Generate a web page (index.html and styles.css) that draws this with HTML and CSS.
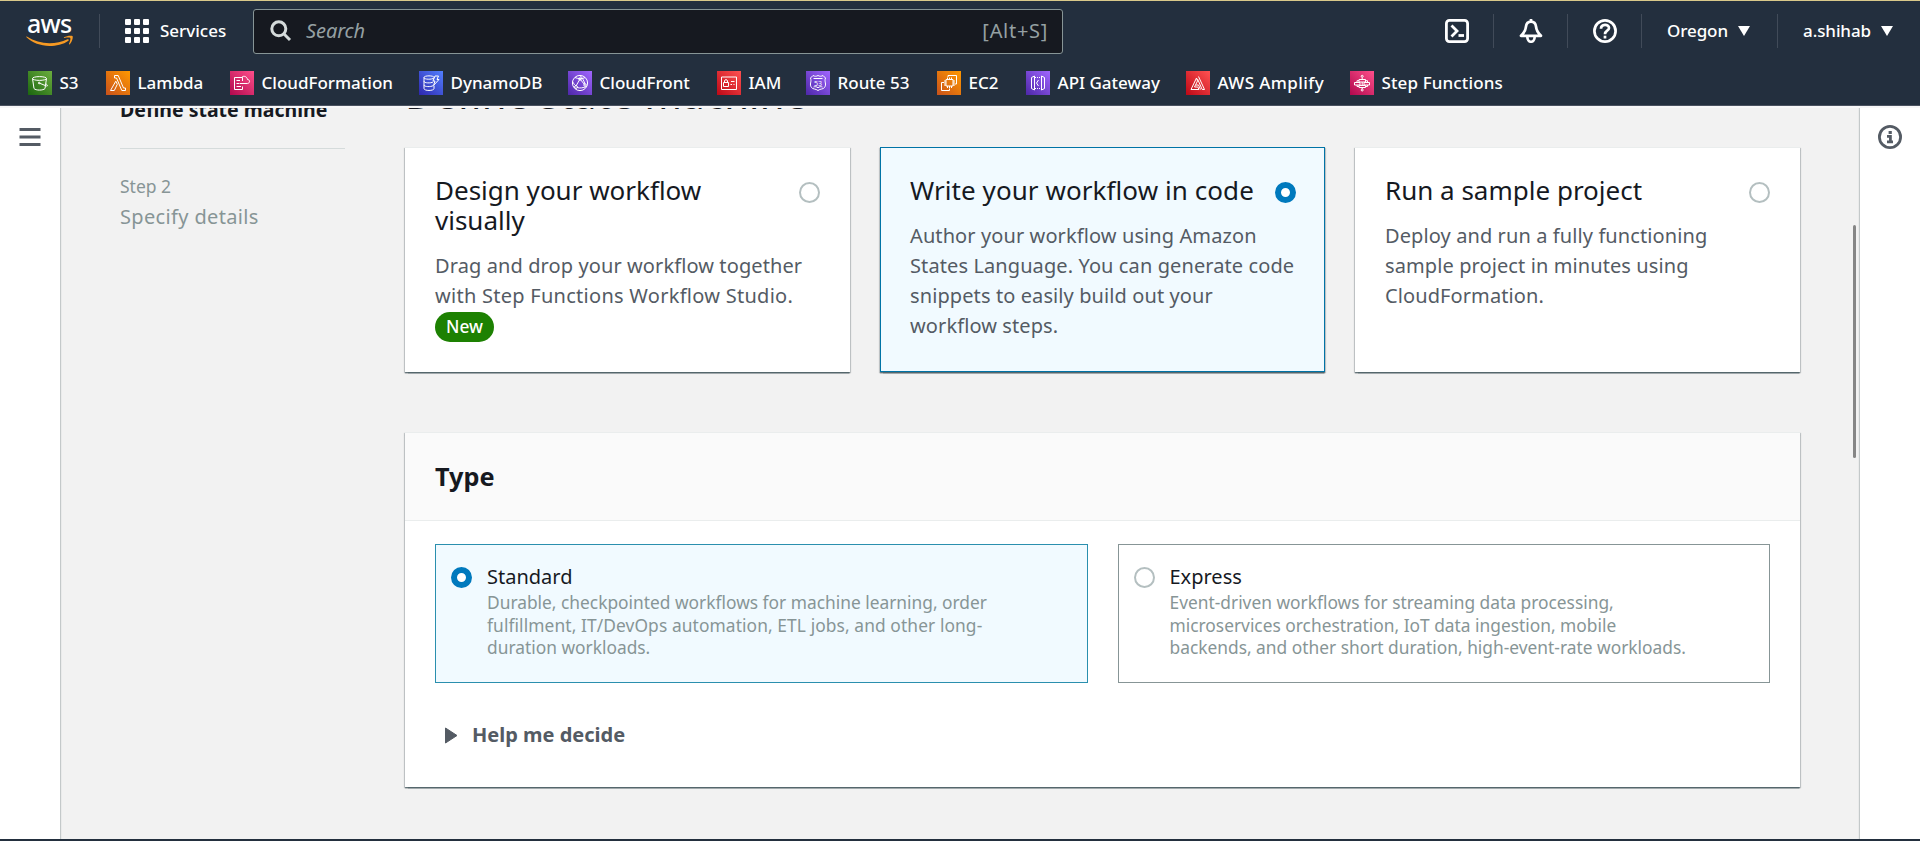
FILE: index.html
```
<!DOCTYPE html>
<html lang="en">
<head>
<meta charset="utf-8">
<title>Step Functions - Define state machine</title>
<link rel="stylesheet" href="styles.css">
</head>
<body>
<header class="header">
  <div class="topnav">
    <a class="logo">
      <span class="logo-text">aws</span>
      <svg class="logo-smile" width="48" height="12" viewBox="0 0 48 12"><path d="M0.8 1.6C8 6 15.500 8.200 23.500 8.200C29.500 8.200 36 6.900 41.500 4.300C42.600 3.800 43.300 5 42.400 5.700C37.300 9.400 30 11 23.500 11C14.500 11 6.500 7.700 0.500 2.300C0 1.900 0.300 1.300 0.800 1.600Z" fill="#f79a23"/><path d="M38 2.300C40.500 0.500 45.500 0.300 46.500 1C47.300 2 46.300 6.800 43.700 9.200C43.200 9.600 42.800 9.300 43 8.800C43.700 7.200 44.900 3.900 44.300 3.100C43.700 2.300 40.300 2.700 38.500 2.900C37.900 3 37.700 2.600 38 2.300Z" fill="#f79a23"/></svg>
    </a>
    <span class="divider"></span>
    <a class="services">
      <svg width="24" height="24" viewBox="0 0 24 24" fill="#fff"><rect width="6" height="6" rx="1"/><rect x="9" width="6" height="6" rx="1"/><rect x="18" width="6" height="6" rx="1"/><rect y="9" width="6" height="6" rx="1"/><rect x="9" y="9" width="6" height="6" rx="1"/><rect x="18" y="9" width="6" height="6" rx="1"/><rect y="18" width="6" height="6" rx="1"/><rect x="9" y="18" width="6" height="6" rx="1"/><rect x="18" y="18" width="6" height="6" rx="1"/></svg>
      <span>Services</span>
    </a>
    <div class="search">
      <svg width="22" height="22" viewBox="0 0 22 22" fill="none" stroke="#d5dbdb" stroke-width="3"><circle cx="8.800" cy="8.800" r="7"/><path d="M13.800 13.800L20 20"/></svg>
      <span class="search-hint">Search</span>
      <span class="search-key">[Alt+S]</span>
    </div>
    <div class="tools">
      <a class="tool"><svg width="24" height="24" viewBox="0 0 24 24" fill="none" stroke="#fff" stroke-width="2.800"><rect x="1.400" y="1.400" width="21.200" height="21.200" rx="3"/><path d="M6.500 6.500L12 12L6.500 17.500"/><path d="M13.500 16.500H19"/></svg></a>
      <span class="divider"></span>
      <a class="tool"><svg width="24" height="24" viewBox="0 0 24 24" fill="none" stroke="#fff" stroke-width="2.700" stroke-linejoin="round"><path d="M12 0V3"/><path d="M12 2.600C8.500 2.600 7.300 5 7 7.500C6.600 11.500 5 14 2 16.800H22C19 14 17.400 11.500 17 7.500C16.700 5 15.500 2.600 12 2.600Z"/><path d="M8.300 17.500C8.300 24.500 15.700 24.500 15.700 17.500"/></svg></a>
      <span class="divider"></span>
      <a class="tool"><svg width="24" height="24" viewBox="0 0 24 24" fill="none" stroke="#fff" stroke-width="2.700"><circle cx="12" cy="12" r="10.600"/><path d="M8 9.700C8 4.600 16 4.700 16 9C16 12 12 11.500 12 15.200"/><path d="M12 16.700V19.500"/></svg></a>
      <span class="divider"></span>
      <a class="menu menu-region"><span>Oregon</span><i class="caret"></i></a>
      <span class="divider"></span>
      <a class="menu"><span>a.shihab</span><i class="caret"></i></a>
    </div>
  </div>
  <nav class="favorites">
    <a class="fav"><svg class="fav-icon bg-green" viewBox="0 0 24 24"><ellipse cx="11.500" cy="7.500" rx="7" ry="1.900"/><path d="M4.500 7.500L6 17.500C7.500 19.600 15.500 19.600 17 17.500L18.500 7.500M11.500 12.200L18.500 15C20.300 15.200 19.500 13.700 17.800 12.800"/><circle cx="11.200" cy="12" r=".8"/></svg><span>S3</span></a>
    <a class="fav"><svg class="fav-icon bg-orange" viewBox="0 0 24 24"><path d="M8.500 4.500H12.200L17.500 17H19.500V19.500H15.800L10.500 7H8.500ZM9.800 10.200L11.300 13.300L8.300 19.500H4.500Z"/></svg><span>Lambda</span></a>
    <a class="fav"><svg class="fav-icon bg-pink" viewBox="0 0 24 24"><path d="M12.500 10V6.500H4.500V18.500H12.500V15.500M6.500 9.500H10M6.500 12.500H9M6.500 15.500H11M9.500 12.500H17.500C20.500 12 20 8.500 17.500 8.500C17 5 12.500 4.200 11.500 7"/></svg><span>CloudFormation</span></a>
    <a class="fav"><svg class="fav-icon bg-blue" viewBox="0 0 24 24"><path d="M15 6.500C15 4.300 5 4.300 5 6.500V17.500C5 20.100 15 20.100 15 17.500V14.500M5 6.500C5 8.700 13 8.700 15 7M5 10.200C5 12.300 12 12.300 14 11M5 13.900C5 16 12 16 14 14.700M16 5H19.500L18 8.500H20L14.500 14.500L16 10H14Z"/></svg><span>DynamoDB</span></a>
    <a class="fav"><svg class="fav-icon bg-purple" viewBox="0 0 24 24"><circle cx="12" cy="12" r="7.600"/><path d="M7 6.500C10 8 15 8 17 6.500M8 15L12 8L16.500 13.500M8 15C5.500 13 5 11 4.500 10.500M9 16.500C12 17.500 15 16.800 18.500 15.500M12 4.500C14.500 7 16 10 17 13"/><circle cx="12" cy="8" r="1.200"/><circle cx="8" cy="16" r="1.400"/><circle cx="17" cy="14" r="1.200"/></svg><span>CloudFront</span></a>
    <a class="fav"><svg class="fav-icon bg-red" viewBox="0 0 24 24"><path d="M4.500 6H19.500V18.500H4.500ZM6.500 11.500H11.500V15.500H6.500ZM7.500 11.500V10C7.500 8.200 10.500 8.200 10.500 10V11.500M14 10.500H17.500M13.500 13.500H15M16.500 13.500H17.500"/></svg><span>IAM</span></a>
    <a class="fav"><svg class="fav-icon bg-purple" viewBox="0 0 24 24"><path d="M7 4.500C8.500 5.500 10.500 5.500 12 4.500C13.500 5.500 15.500 5.500 17 4.500L19.500 7C18 11 21 13 18.500 16.500C17 18.500 14.500 17.500 12 19.500C9.500 17.500 7 18.500 5.500 16.500C3 13 6 11 4.500 7ZM7.500 7.500H16.500M7.500 16C9 15.500 10.500 15.500 12 16.800C13.500 15.500 15 15.500 16.500 16"/><text x="12" y="14.600" class="shield-text">53</text></svg><span>Route 53</span></a>
    <a class="fav"><svg class="fav-icon bg-orange" viewBox="0 0 24 24"><path d="M9 8.500H16V15H9ZM10.500 8.500V6.500M12.500 8.500V6.500M14.500 8.500V6.500M10.500 15V17M12.500 15V17M14.500 15V17M9 10H7M9 12H7M9 14H7M16 10H18M16 12H18M16 14H18M11 6V4.500H19.500V13H18M7 11.500H4.500V19.500H12.500V17.500"/></svg><span>EC2</span></a>
    <a class="fav"><svg class="fav-icon bg-purple" viewBox="0 0 24 24"><path d="M8.500 5L5.500 6.500V17.500L8.500 19ZM15.500 5L18.500 6.500V17.500L15.500 19ZM12.500 9L10.500 12L12.500 15"/><path d="M9 6.500H15.500M9 17.500H15.500" stroke-dasharray="1 1"/></svg><span>API Gateway</span></a>
    <a class="fav fav-amplify"><svg class="fav-icon bg-red" viewBox="0 0 24 24"><path d="M10.500 7L5 18.500H13L11.800 16H8.500L11.500 10ZM12.500 5.500L18.500 18.500H16.200L11.500 8M10 14H12.500L14.500 18.500"/></svg><span>AWS Amplify</span></a>
    <a class="fav fav-step"><svg class="fav-icon bg-pink" viewBox="0 0 24 24"><path d="M9 8.500H15.500V11H9ZM4.500 11.500H10V14H4.500ZM14 11.500H19.500V14H14ZM9 14.500H15.500V16.500H9ZM12.200 6.500V8.500M12.200 11V14.500M12.200 16.500V18M7 11.500V9.700H9M17.500 11.500V9.700H15.500M7 14V15.500H9M17.500 14V15.500H15.500"/><circle cx="12.200" cy="5.300" r="1"/><circle cx="12.200" cy="19" r="1"/></svg><span>Step Functions</span></a>
  </nav>
</header>

<div class="page">
  <aside class="rail rail-left">
    <svg width="22" height="18" viewBox="0 0 22 18" fill="#545b64"><rect x=".5" width="21" height="3"/><rect x=".5" y="7.500" width="21" height="3"/><rect x=".5" y="15" width="21" height="3"/></svg>
  </aside>

  <div class="content">
    <nav class="steps">
      <div class="step-current">Define state machine</div>
      <div class="step-next">
        <div class="step-label">Step 2</div>
        <div class="step-name">Specify details</div>
      </div>
    </nav>

    <main class="main">
      <h1 class="title">Define state machine</h1>
      <div class="cards">
        <label class="card">
          <span class="card-head"><span class="card-title">Design your workflow visually</span><i class="radio"></i></span>
          <span class="card-text">Drag and drop your workflow together<br><span class="wide">with Step Functions Workflow Studio.</span><br><b class="pill">New</b></span>
        </label>
        <label class="card card-selected">
          <span class="card-head"><span class="card-title">Write your workflow in code</span><i class="radio radio-on"></i></span>
          <span class="card-text">Author your workflow using Amazon<br>States Language. You can generate code<br>snippets to easily build out your<br>workflow steps.</span>
        </label>
        <label class="card">
          <span class="card-head"><span class="card-title">Run a sample project</span><i class="radio"></i></span>
          <span class="card-text">Deploy and run a fully functioning<br>sample project in minutes using<br>CloudFormation.</span>
        </label>
      </div>

      <section class="panel">
        <h2 class="panel-head">Type</h2>
        <div class="panel-body">
          <div class="options">
            <label class="option option-selected">
              <i class="radio radio-on"></i>
              <span>
                <span class="option-title">Standard</span>
                <span class="option-text">Durable, checkpointed workflows for machine learning, order<br><span class="wide">fulfillment, IT/DevOps automation, ETL jobs, and other long-</span><br>duration workloads.</span>
              </span>
            </label>
            <label class="option">
              <i class="radio"></i>
              <span>
                <span class="option-title">Express</span>
                <span class="option-text">Event-driven workflows for streaming data processing,<br>microservices orchestration, IoT data ingestion, mobile<br>backends, and other short duration, high-event-rate workloads.</span>
              </span>
            </label>
          </div>
          <div class="help">
            <svg width="14" height="17" viewBox="0 0 14 17"><path d="M1.500 1L13 8.500L1.500 16Z" fill="#545b64" stroke="#545b64" stroke-linejoin="round"/></svg>
            <span>Help me decide</span>
          </div>
        </div>
      </section>
    </main>
    <div class="scrollbar"></div>
  </div>

  <aside class="rail rail-right">
    <svg width="24" height="24" viewBox="0 0 24 24" fill="none" stroke="#545b64"><circle cx="12" cy="12" r="10.600" stroke-width="2.800"/><path d="M12.200 6V9" stroke-width="3.200"/><path d="M9 11.400H12.400V16.500M9 16.800H15" stroke-width="2.800"/></svg>
  </aside>
</div>
<div class="bottom-bar"></div>
</body>
</html>
```
FILE: styles.css
```
* { box-sizing: border-box; }

body {
  margin: 0;
  height: 841px;
  display: flex;
  flex-direction: column;
  overflow: hidden;
  background: #f2f2f2;
  color: #16191f;
  font: 20px/30px "Noto Sans", sans-serif;
}

svg { display: block; flex: none; }

/* Header */
.header {
  flex: none;
  height: 108px;
  background: #232f3e;
  border-top: 1px solid #d9c98a;
  border-bottom: 2px solid #f7f7f8;
  box-shadow: inset 0 -1px 0 #4a5260;
  color: #fff;
  font-size: 17px;
  font-weight: 500;
}
.topnav {
  display: flex;
  align-items: center;
  height: 60px;
  padding: 0 27px 0 26px;
}
.logo { width: 48px; height: 30px; }
.logo-text {
  display: block;
  height: 19px;
  padding-left: 1px;
  font-size: 25px;
  line-height: 14px;
  letter-spacing: -0.8px;
}
.divider { width: 1px; height: 34px; background: #414b59; }
.logo + .divider { margin-left: 25px; }
.services { display: flex; align-items: center; gap: 11px; margin-left: 25px; width: 128px; }
.search {
  display: flex;
  align-items: center;
  width: 810px;
  height: 45px;
  padding: 0 14px 0 16px;
  background: #161920;
  border: 1px solid #879596;
  border-radius: 3px;
  color: #95a0a3;
  font-size: 20px;
  font-weight: 400;
}
.search-hint { margin-left: 14px; font-style: italic; flex: 1; letter-spacing: -0.1px; }
.search-key { letter-spacing: 0.7px; }
.tools { display: flex; align-items: center; margin-left: auto; }
.tool { margin: 0 24px 0 25px; }
.menu { display: flex; align-items: center; gap: 10px; padding-left: 25px; letter-spacing: -0.1px; }
.menu-region { width: 135px; }
.caret {
  border: 6px solid transparent;
  border-top: 10px solid #fff;
  border-bottom: 0;
}

.favorites {
  display: grid;
  grid-template-columns: 78px 124px 189px 149px 149px 89px 131px 89px 160px 164px auto;
  align-items: center;
  height: 43px;
  padding-left: 28px;
}
.fav { display: flex; align-items: center; gap: 7.500px; white-space: nowrap; }
.fav-amplify { letter-spacing: 0.4px; }
.fav-step { letter-spacing: 0.12px; }
.fav-icon {
  width: 24px;
  height: 24px;
  fill: none;
  stroke: #fff;
  stroke-width: 1;
}
.shield-text { font-size: 7px; font-weight: 400; fill: #fff; stroke: none; text-anchor: middle; }
.bg-green { background: linear-gradient(45deg, #1b660f, #6cae3e); }
.bg-orange { background: linear-gradient(45deg, #c8511b, #f90); }
.bg-pink { background: linear-gradient(45deg, #b0084d, #ff4f8b); }
.bg-blue { background: linear-gradient(45deg, #2e27ad, #527fff); }
.bg-purple { background: linear-gradient(45deg, #4d27a8, #a166ff); }
.bg-red { background: linear-gradient(45deg, #bd0816, #ff5252); }

/* Page frame */
.page { display: flex; flex: 1; min-height: 0; overflow: hidden; }
.rail { flex: none; width: 60px; background: #fff; z-index: 1; }
.rail-left { padding: 20px 0 0 19px; box-shadow: 1px 0 1px #c4c9ca; }
.rail-right { padding: 17px 0 0 18px; box-shadow: -1px 0 1px #c4c9ca; }
.content { position: relative; display: flex; flex: 1; padding: 0 60px; }
.scrollbar {
  position: absolute;
  top: 117px;
  right: 4px;
  width: 3px;
  height: 233px;
  border-radius: 2px;
  background: #868686;
}
.bottom-bar { flex: none; height: 2px; background: #232f3e; }

/* Wizard steps */
.steps { width: 225px; margin-right: 60px; }
.step-current {
  height: 52px;
  margin-top: -11px;
  line-height: 25px;
  font-weight: 700;
  font-size: 19.500px;
  border-bottom: 1px solid #d5dbdb;
  white-space: nowrap;
}
.step-next { padding-top: 22px; color: #879596; }
.step-label { font-size: 17.500px; line-height: 31px; }
.step-name { letter-spacing: 0.35px; }

/* Choice cards */
.title { margin: -39px 0 28px; font-size: 40px; line-height: 50px; font-weight: 400; letter-spacing: 0.2px; }
.main { width: 1395px; }
.cards { display: grid; grid-template-columns: repeat(3, 445px); gap: 30px; }
.card, .panel {
  border-top: 1px solid #eaeded;
  background: #fff;
  box-shadow: 0 1px 1px rgba(0, 28, 36, 0.35), 0 1.500px 1px rgba(0, 28, 36, 0.25), 1px 1px 1px rgba(0, 28, 36, 0.15), -1px 1px 1px rgba(0, 28, 36, 0.15);
}
.card { height: 225px; padding: 27px 30px 0; }
.card-selected { background: #f1faff; border: 1px solid #0073a6; padding: 27px 28px 0 29px; }
.card-head { display: flex; justify-content: space-between; }
.card-title { font-size: 26px; max-width: 350px; }
.card-selected .card-title { letter-spacing: 0.07px; }
.card-text { display: block; margin-top: 16px; color: #545b64; letter-spacing: 0.1px; white-space: nowrap; }
.card-text .wide { letter-spacing: 0.27px; }
.pill {
  display: inline-block;
  height: 30px;
  margin-top: 1px;
  padding: 0 11px;
  border-radius: 15px;
  background: #1d8102;
  color: #fff;
  font-size: 17.300px;
  font-weight: 500;
  letter-spacing: 0;
  vertical-align: top;
}
.radio {
  flex: none;
  width: 21px;
  height: 21px;
  margin-top: 7px;
  border: 2px solid #b4bfc0;
  border-radius: 50%;
  background: #fff;
}
.radio-on { border: 6px solid #0079bd; }

/* Type panel */
.panel { height: 355px; margin-top: 60px; }
.panel-head {
  height: 88px;
  margin: 0;
  padding: 28px 30px 0;
  background: #fafafa;
  border-bottom: 1px solid #eaeded;
  font-size: 25.300px;
  line-height: 30px;
}
.panel-body { padding: 23px 30px 0; }
.options { display: grid; grid-template-columns: 1fr 1fr; gap: 30px; }
.option {
  display: flex;
  gap: 15px;
  height: 139px;
  padding: 17px 15px 0;
  border: 1px solid #879596;
}
.option-selected { background: #f1faff; border-color: #2a8fae; }
.option .radio { margin-top: 5px; }
.option-title { display: block; line-height: 29px; }
.option-text { display: block; color: #879596; font-size: 17.350px; line-height: 22.500px; white-space: nowrap; }
.option-text .wide { letter-spacing: 0.1px; }
.help {
  display: flex;
  align-items: center;
  gap: 14px;
  margin-top: 37px;
  padding-left: 9px;
  color: #545b64;
  font-weight: 700;
}
```
